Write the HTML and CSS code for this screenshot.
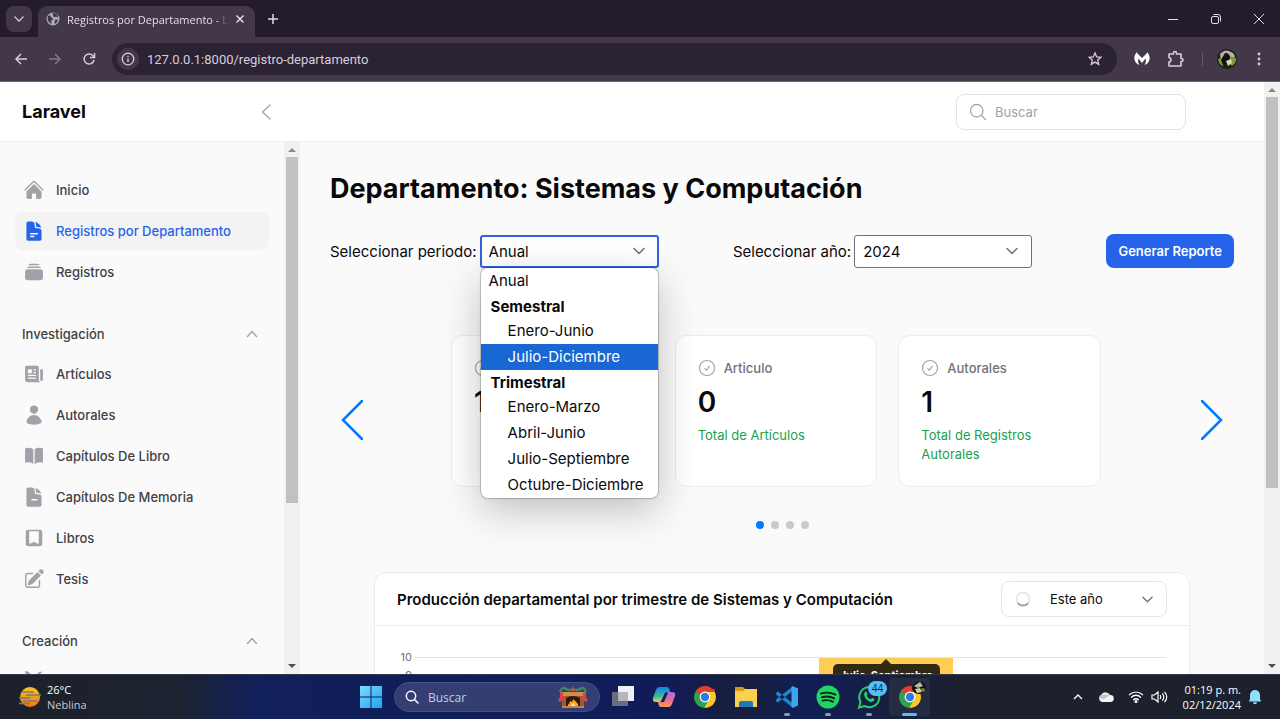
FILE: index.html
```html
<!DOCTYPE html>
<html lang="es">
<head>
<meta charset="utf-8">
<title>Registros por Departamento - Laravel</title>
<link rel="stylesheet" href="styles.css">
</head>
<body>
<svg class="defs" aria-hidden="true">
  <symbol id="chev-down" viewBox="0 0 12 12"><path d="M1 3.500 6 8.500l5-5" fill="none" stroke="currentColor" stroke-width="1.500" stroke-linecap="round" stroke-linejoin="round"/></symbol>
  <symbol id="check" viewBox="0 0 24 24"><path d="M9 12.750 11.250 15 15 9.750M22 12a10 10 0 1 1-20 0 10 10 0 0 1 20 0Z" fill="none" stroke="currentColor" stroke-width="1.500" stroke-linecap="round" stroke-linejoin="round"/></symbol>
  <symbol id="chrome" viewBox="0 0 24 24">
    <path d="M12 12 2.500 6.500A11 11 0 0 1 21.500 6.500Z" fill="#e2402f"/><path d="M12 12 21.500 6.500A11 11 0 0 1 12 23Z" fill="#fcc92c"/><path d="M12 12V23A11 11 0 0 1 2.500 6.500Z" fill="#2fa24c"/>
    <path d="M12 7h9.800L16.500 14.500Z" fill="#fcc92c"/><path d="M12 7 2.500 6.500 12 4h9.500l.4 3Z" fill="#e2402f"/><path d="M7.600 14.500 2.500 6.500l6 3 7.800 5L11 23Z" fill="#2fa24c"/>
    <circle cx="12" cy="12" r="5.400" fill="#fff"/><circle cx="12" cy="12" r="4.200" fill="#2f78e8"/>
  </symbol>
</svg>

<header class="tabstrip">
  <button class="tab-search" aria-label="Buscar pestañas"><svg width="10" height="10"><use href="#chev-down"/></svg></button>
  <div class="tab">
    <svg width="14" height="14" viewBox="0 0 14 14"><circle cx="7" cy="7" r="6.500" fill="#a9aeb5"/><path d="M2 4c2-1 3 0 3 1s2 .5 2 2-2 1-2 2 1 2 0 3C2 10 1 7 2 4ZM7 1c3-.5 5 2 5 4-1 1-2-1-3 0S7 4 7 3 6 2 7 1ZM9 8c1-1 3 0 3 0s-1 3-3 4c-1-1 0-3 0-4Z" fill="#43374a"/></svg>
    <span class="tab-title">Registros por Departamento - Laravel</span>
    <button class="plain" aria-label="Cerrar pestaña"><svg width="10" height="10" viewBox="0 0 10 10"><path d="m1.500 1.500 7 7m0-7-7 7" stroke="currentColor" stroke-width="1.500"/></svg></button>
  </div>
  <button class="plain new-tab" aria-label="Nueva pestaña"><svg width="12" height="12" viewBox="0 0 12 12"><path d="M6 1v10M1 6h10" stroke="currentColor" stroke-width="1.500"/></svg></button>
  <div class="window-controls">
    <button class="plain" aria-label="Minimizar"><svg width="12" height="12" viewBox="0 0 12 12"><path d="M1 6.500h10" stroke="currentColor"/></svg></button>
    <button class="plain" aria-label="Restaurar"><svg width="12" height="12" viewBox="0 0 12 12" fill="none" stroke="currentColor"><rect x="1.500" y="3.500" width="7" height="7" rx="1.500"/><path d="M3.500 1.500H8a2.500 2.500 0 0 1 2.500 2.500v4.500"/></svg></button>
    <button class="plain" aria-label="Cerrar"><svg width="12" height="12" viewBox="0 0 12 12"><path d="m1 1 10 10m0-10L1 11" stroke="currentColor"/></svg></button>
  </div>
</header>

<nav class="toolbar" aria-label="Navegador">
  <button class="plain" aria-label="Atrás"><svg width="14" height="14" viewBox="0 0 14 14" fill="none" stroke="currentColor" stroke-width="1.500"><path d="M13 7H2m5-5L2 7l5 5"/></svg></button>
  <button class="plain dim" aria-label="Adelante"><svg width="14" height="14" viewBox="0 0 14 14" fill="none" stroke="currentColor" stroke-width="1.500"><path d="M1 7h11M7 2l5 5-5 5"/></svg></button>
  <button class="plain" aria-label="Recargar"><svg width="14" height="14" viewBox="0 0 14 14" fill="none" stroke="currentColor" stroke-width="1.500"><path d="M12 8a5 5 0 1 1-1.300-4.500L12.300 5M12.500 1v4.500H8"/></svg></button>
  <div class="omnibox">
    <span class="site-info"><svg width="14" height="14" viewBox="0 0 14 14" fill="none" stroke="currentColor" stroke-width="1.300"><circle cx="7" cy="7" r="5.800"/><path d="M7 6.300V10M7 3.800v1.300"/></svg></span>
    <input class="url" type="text" aria-label="Dirección" value="127.0.0.1:8000/registro-departamento">
    <button class="plain" aria-label="Favorito"><svg width="16" height="16" viewBox="0 0 16 16" fill="none" stroke="currentColor" stroke-width="1.300"><path d="m8 2 1.700 3.900 4.200.4-3.200 2.800 1 4.200L8 11.100l-3.700 2.200 1-4.200L2.100 6.300l4.200-.4Z"/></svg></button>
  </div>
  <div class="extensions">
    <button class="plain" aria-label="Extensión"><svg width="16" height="16" viewBox="0 0 16 16"><path d="M3 1C0 4-.5 8 1.500 11c1 1.500 2.500 2.500 4 3C4 12 3.800 10 4.500 7.500L8 12l3.500-4.500c.7 2.500.5 4.500-1 6.500 1.500-.5 3-1.500 4-3C16.500 8 16 4 13 1c0 1-.5 2-1.500 2.500L8 7 4.500 3.500C3.500 3 3 2 3 1Z" fill="#fff"/></svg></button>
    <button class="plain" aria-label="Extensiones"><svg width="18" height="18" viewBox="0 0 18 18" fill="none" stroke="currentColor" stroke-width="1.600" stroke-linejoin="round"><path d="M2 4h4.500V3a1.500 1.500 0 0 1 3 0v1H14v4.500h.5a1.500 1.500 0 0 1 0 3H14V16H2v-4.300a2 2 0 0 0 0-4Z"/></svg></button>
    <span class="divider"></span>
    <button class="plain" aria-label="Perfil"><svg width="20" height="20" viewBox="0 0 20 20"><circle cx="10" cy="10" r="10" fill="#1b2015"/><path d="M3 5Q9-2 17 5l1 3-6 1-8 4Z" fill="#b9b0a3"/><path d="M1 10q3-2 7 2l-2 5Q2 16 1 10Zm11-3 7 2q1 4-4 8l-3-3Z" fill="#829a3e"/><path d="M8 4q5 0 5 5l-2 6-5 1-2-5Z" fill="#10110d"/><path d="m9 12 5-2 1 4-4 3Z" fill="#d5d9b0"/></svg></button>
    <button class="plain menu-btn" aria-label="Menú"><svg width="4" height="16" viewBox="0 0 4 16" fill="currentColor"><circle cx="2" cy="3" r="1.400"/><circle cx="2" cy="8" r="1.400"/><circle cx="2" cy="13" r="1.400"/></svg></button>
  </div>
</nav>

<div class="viewport">
  <div class="app">
    <header class="topbar">
      <div class="brand-area">
        <a class="brand" href="#">Laravel</a>
        <button class="plain" aria-label="Contraer menú"><svg width="10" height="16" viewBox="0 0 10 16"><path d="M9 1 1.500 8 9 15" fill="none" stroke="currentColor" stroke-width="1.300" stroke-linecap="round" stroke-linejoin="round"/></svg></button>
      </div>
      <label class="search">
        <svg width="20" height="20" viewBox="0 0 24 24"><path d="m21 21-5.197-5.197m0 0A7.500 7.500 0 1 0 5.196 5.196a7.500 7.500 0 0 0 10.607 10.607Z" fill="none" stroke="currentColor" stroke-width="1.500" stroke-linecap="round"/></svg>
        <input type="search" placeholder="Buscar" aria-label="Buscar">
      </label>
    </header>

    <div class="columns">
      <aside class="sidebar">
        <nav class="side-nav">
          <div class="group">
            <a class="item" href="#"><svg viewBox="0 0 24 24"><path d="M11.470 3.841a.75.75 0 0 1 1.060 0l8.690 8.690a.75.75 0 1 0 1.060-1.061l-8.689-8.690a2.250 2.250 0 0 0-3.182 0l-8.690 8.690a.75.75 0 1 0 1.061 1.060l8.690-8.689Z"/><path d="m12 5.432 8.159 8.159c.03.03.06.058.091.086v6.198c0 1.035-.84 1.875-1.875 1.875H15a.75.75 0 0 1-.75-.75v-4.500a.75.75 0 0 0-.75-.75h-3a.75.75 0 0 0-.75.75V21a.75.75 0 0 1-.75.75H5.625a1.875 1.875 0 0 1-1.875-1.875v-6.198a2.290 2.290 0 0 0 .091-.086L12 5.432Z"/></svg>Inicio</a>
            <a class="item active" href="#" aria-current="page"><svg viewBox="0 0 24 24"><path fill-rule="evenodd" d="M5.625 1.500c-1.036 0-1.875.84-1.875 1.875v17.250c0 1.035.84 1.875 1.875 1.875h12.750c1.035 0 1.875-.84 1.875-1.875V12.750A3.750 3.750 0 0 0 16.500 9h-1.875a1.875 1.875 0 0 1-1.875-1.875V5.250A3.750 3.750 0 0 0 9 1.500H5.625ZM7.500 15a.75.75 0 0 1 .75-.75h7.500a.75.75 0 0 1 0 1.500h-7.500A.75.75 0 0 1 7.500 15Zm.75 2.250a.75.75 0 0 0 0 1.500H12a.75.75 0 0 0 0-1.500H8.250Z"/><path d="M12.971 1.816A5.230 5.230 0 0 1 14.250 5.250v1.875c0 .207.168.375.375.375H16.500a5.230 5.230 0 0 1 3.434 1.279 9.768 9.768 0 0 0-6.963-6.963Z"/></svg>Registros por Departamento</a>
            <a class="item" href="#"><svg viewBox="0 0 24 24"><path d="M5.566 4.657A4.505 4.505 0 0 1 6.750 4.500h10.500c.41 0 .806.055 1.183.157A3 3 0 0 0 15.750 3h-7.500a3 3 0 0 0-2.684 1.657ZM2.250 12a3 3 0 0 1 3-3h13.500a3 3 0 0 1 3 3v6a3 3 0 0 1-3 3H5.250a3 3 0 0 1-3-3v-6ZM5.250 7.500c-.41 0-.806.055-1.184.157A3 3 0 0 1 6.750 6h10.500a3 3 0 0 1 2.683 1.657A4.505 4.505 0 0 0 18.750 7.500H5.250Z"/></svg>Registros</a>
          </div>
          <div class="group">
            <button class="group-head">Investigación<svg width="12" height="12" viewBox="0 0 12 12"><path d="m1.500 8.500 4.500-5 4.500 5" fill="none" stroke="currentColor" stroke-width="1.300" stroke-linecap="round" stroke-linejoin="round"/></svg></button>
            <a class="item" href="#"><svg viewBox="0 0 24 24"><path fill-rule="evenodd" d="M4.125 3C3.089 3 2.250 3.840 2.250 4.875V18a3 3 0 0 0 3 3h15a3 3 0 0 1-3-3V4.875C17.250 3.839 16.410 3 15.375 3H4.125ZM12 9.750a.75.75 0 0 0 0 1.500h1.500a.75.75 0 0 0 0-1.500H12Zm-.75-2.250a.75.75 0 0 1 .75-.75h1.500a.75.75 0 0 1 0 1.500H12a.75.75 0 0 1-.75-.75ZM6 12.750a.75.75 0 0 0 0 1.500h7.500a.75.75 0 0 0 0-1.500H6Zm-.75 3.750a.75.75 0 0 1 .75-.75h7.500a.75.75 0 0 1 0 1.500H6a.75.75 0 0 1-.75-.75ZM6 6.750a.75.75 0 0 0-.75.75v3c0 .414.336.75.75.75h3a.75.75 0 0 0 .75-.75v-3A.75.75 0 0 0 9 6.750H6Z"/><path d="M18.750 6.750h1.875c.621 0 1.125.504 1.125 1.125V18a1.500 1.500 0 0 1-3 0V6.750Z"/></svg>Artículos</a>
            <a class="item" href="#"><svg viewBox="0 0 24 24"><path d="M7.500 6a4.500 4.500 0 1 1 9 0 4.500 4.500 0 0 1-9 0ZM3.751 20.105a8.250 8.250 0 0 1 16.498 0 .75.75 0 0 1-.437.695A18.683 18.683 0 0 1 12 22.500c-2.786 0-5.433-.608-7.812-1.700a.75.75 0 0 1-.437-.695Z"/></svg>Autorales</a>
            <a class="item" href="#"><svg viewBox="0 0 24 24"><path d="M11.250 4.533A9.707 9.707 0 0 0 6 3a9.735 9.735 0 0 0-3.250.555.75.75 0 0 0-.5.707v14.250a.75.75 0 0 0 1 .707A8.237 8.237 0 0 1 6 18.750c1.995 0 3.823.707 5.250 1.886V4.533ZM12.750 20.636A8.214 8.214 0 0 1 18 18.750c.966 0 1.890.166 2.750.47a.75.75 0 0 0 1-.708V4.262a.75.75 0 0 0-.5-.707A9.735 9.735 0 0 0 18 3a9.707 9.707 0 0 0-5.250 1.533v16.103Z"/></svg>Capítulos De Libro</a>
            <a class="item" href="#"><svg viewBox="0 0 24 24"><path fill-rule="evenodd" d="M5.625 1.500c-1.036 0-1.875.84-1.875 1.875v17.250c0 1.035.84 1.875 1.875 1.875h12.750c1.035 0 1.875-.84 1.875-1.875V12.750A3.750 3.750 0 0 0 16.500 9h-1.875a1.875 1.875 0 0 1-1.875-1.875V5.250A3.750 3.750 0 0 0 9 1.500H5.625ZM9.750 14.250a.75.75 0 0 0 0 1.500H15a.75.75 0 0 0 0-1.500H9.750Z"/><path d="M14.250 5.250a5.230 5.230 0 0 0-1.279-3.434 9.768 9.768 0 0 1 6.963 6.963A5.230 5.230 0 0 0 16.500 7.500h-1.875a.375.375 0 0 1-.375-.375V5.250Z"/></svg>Capítulos De Memoria</a>
            <a class="item" href="#"><svg viewBox="0 0 24 24"><path fill-rule="evenodd" d="M6 3a3 3 0 0 0-3 3v12a3 3 0 0 0 3 3h12a3 3 0 0 0 3-3V6a3 3 0 0 0-3-3H6Zm1.500 1.500a.75.75 0 0 0-.75.75V17.500a.75.75 0 0 0 1.085.67L12 16.089l4.165 2.083a.75.75 0 0 0 1.085-.671V5.250a.75.75 0 0 0-.75-.75h-9Z"/></svg>Libros</a>
            <a class="item" href="#"><svg viewBox="0 0 24 24"><path d="M21.731 2.269a2.625 2.625 0 0 0-3.712 0l-1.157 1.157 3.712 3.712 1.157-1.157a2.625 2.625 0 0 0 0-3.712ZM19.513 8.199l-3.712-3.712-8.400 8.400a5.250 5.250 0 0 0-1.320 2.214l-.8 2.685a.75.75 0 0 0 .933.933l2.685-.8a5.250 5.250 0 0 0 2.214-1.320l8.400-8.400Z"/><path d="M5.250 5.250a3 3 0 0 0-3 3v10.500a3 3 0 0 0 3 3h10.500a3 3 0 0 0 3-3V13.500a.75.75 0 0 0-1.500 0v5.250a1.500 1.500 0 0 1-1.500 1.500H5.250a1.500 1.500 0 0 1-1.500-1.500V8.250a1.500 1.500 0 0 1 1.500-1.500h5.250a.75.75 0 0 0 0-1.500H5.250Z"/></svg>Tesis</a>
          </div>
          <div class="group">
            <button class="group-head">Creación<svg width="12" height="12" viewBox="0 0 12 12"><path d="m1.500 8.500 4.500-5 4.500 5" fill="none" stroke="currentColor" stroke-width="1.300" stroke-linecap="round" stroke-linejoin="round"/></svg></button>
            <a class="item" href="#" aria-label="Creación"><svg viewBox="0 0 24 24"><path d="M2 1.500c3-1 5 1 6.500 3L12 8l4-4.500c1.500-1.500 3-2 5-1.500L13 11l8 9-3 1.500-7-8-6 7-3-2 7-8-2.500-3C4.500 6 2.500 4.500 2 1.500Z"/></svg></a>
          </div>
        </nav>
        <div class="scrollbar" aria-hidden="true"><span class="arrow up"></span><span class="thumb thumb-side"></span><span class="arrow down"></span></div>
      </aside>

      <main class="main">
        <h1>Departamento: Sistemas y Computación</h1>
        <div class="filters">
          <div class="field">
            <label for="periodo">Seleccionar periodo:</label>
            <div class="select-wrap">
              <select id="periodo" class="select focused">
                <option selected>Anual</option>
                <optgroup label="Semestral"><option>Enero-Junio</option><option>Julio-Diciembre</option></optgroup>
                <optgroup label="Trimestral"><option>Enero-Marzo</option><option>Abril-Junio</option><option>Julio-Septiembre</option><option>Octubre-Diciembre</option></optgroup>
              </select>
              <svg class="caret" width="12" height="12"><use href="#chev-down"/></svg>
              <ul class="popup" role="listbox" aria-label="Periodo">
                <li class="opt" role="option">Anual</li>
                <li class="opt-group">Semestral</li>
                <li class="opt sub" role="option">Enero-Junio</li>
                <li class="opt sub hover" role="option">Julio-Diciembre</li>
                <li class="opt-group">Trimestral</li>
                <li class="opt sub" role="option">Enero-Marzo</li>
                <li class="opt sub" role="option">Abril-Junio</li>
                <li class="opt sub" role="option">Julio-Septiembre</li>
                <li class="opt sub" role="option">Octubre-Diciembre</li>
              </ul>
            </div>
          </div>
          <div class="field">
            <label for="anio">Seleccionar año:</label>
            <div class="select-wrap">
              <select id="anio" class="select"><option>2024</option></select>
              <svg class="caret" width="12" height="12"><use href="#chev-down"/></svg>
            </div>
          </div>
          <button class="primary">Generar Reporte</button>
        </div>

        <section class="carousel" aria-label="Totales">
          <button class="plain nav-arrow" aria-label="Anterior"><svg width="22" height="40" viewBox="0 0 22 40"><path d="M21 1 2 20l19 19" fill="none" stroke="currentColor" stroke-width="2.500" stroke-linecap="round"/></svg></button>
          <div class="cards">
            <article class="card">
              <div class="card-label"><svg width="18" height="18"><use href="#check"/></svg></div>
              <div class="card-value">1</div>
            </article>
            <article class="card">
              <div class="card-label"><svg width="18" height="18"><use href="#check"/></svg>Articulo</div>
              <div class="card-value">0</div>
              <div class="card-note">Total de Artículos</div>
            </article>
            <article class="card">
              <div class="card-label"><svg width="18" height="18"><use href="#check"/></svg>Autorales</div>
              <div class="card-value">1</div>
              <div class="card-note">Total de Registros Autorales</div>
            </article>
          </div>
          <button class="plain nav-arrow" aria-label="Siguiente"><svg width="22" height="40" viewBox="0 0 22 40"><path d="m1 1 19 19L1 39" fill="none" stroke="currentColor" stroke-width="2.500" stroke-linecap="round"/></svg></button>
        </section>
        <div class="dots"><span class="dot on"></span><span class="dot"></span><span class="dot"></span><span class="dot"></span></div>

        <section class="chart-card">
          <header class="chart-head">
            <h2>Producción departamental por trimestre de Sistemas y Computación</h2>
            <div class="select-wrap">
              <svg class="spinner" width="16" height="16" viewBox="0 0 16 16" fill="none" stroke-width="2"><circle cx="8" cy="8" r="6.500" stroke="#e8e8ea"/><path d="M2.800 12a6.500 6.500 0 0 0 10.400 0" stroke="#a1a1aa"/></svg>
              <select class="range" aria-label="Intervalo"><option>Este año</option></select>
              <svg class="caret" width="11" height="11"><use href="#chev-down"/></svg>
            </div>
          </header>
          <div class="chart">
            <div class="axis"><span>10</span><span>9</span></div>
            <div class="plot">
              <div class="slot"></div>
              <div class="slot"></div>
              <div class="slot"><div class="bar"><div class="tooltip">Julio-Septiembre</div></div></div>
              <div class="slot"></div>
            </div>
          </div>
        </section>
      </main>
    </div>
  </div>
  <div class="scrollbar" aria-hidden="true"><span class="arrow up"></span><span class="thumb thumb-page"></span><span class="arrow down"></span></div>
</div>

<footer class="taskbar">
  <div class="weather">
    <svg width="24" height="24" viewBox="0 0 24 24"><defs><linearGradient id="sun" x2="0" y2="1"><stop stop-color="#fbc51e"/><stop offset="1" stop-color="#f0751a"/></linearGradient></defs><circle cx="12" cy="12" r="10" fill="url(#sun)"/><path d="M4 7h12M8 10h15M1 13h11M5 16h15M1 18.500h11" stroke="#7e7a6d" stroke-width="1.300"/></svg>
    <div><strong>26°C</strong><span>Neblina</span></div>
  </div>
  <div class="task-center">
    <button class="plain" aria-label="Inicio"><svg width="22" height="22" viewBox="0 0 22 22"><defs><linearGradient id="win" x2="1" y2="1"><stop stop-color="#7edcfb"/><stop offset="1" stop-color="#1ba4f2"/></linearGradient></defs><path d="M0 0h10.500v10.500H0ZM11.500 0H22v10.500H11.500ZM0 11.500h10.500V22H0ZM11.500 11.500H22V22H11.500Z" fill="url(#win)"/></svg></button>
    <label class="task-search">
      <svg width="14" height="14" viewBox="0 0 14 14" fill="none" stroke="#fff" stroke-width="1.500" stroke-linecap="round"><circle cx="6" cy="6" r="4.700"/><path d="m9.500 9.500 3.500 3.500"/></svg>
      <input type="text" placeholder="Buscar" aria-label="Buscar en Windows">
      <svg width="32" height="24" viewBox="0 0 32 24"><path d="M5 8h22v14H5Z" fill="#9f5b2f"/><path d="M3 7h26v4H3Z" fill="#d58b4b"/><path d="M9 13q7-4 14 0v9H9Z" fill="#30180f"/><path d="M11 22c-1-3 2-3 2-6 2 1 2 2 3-2 2 2 3 2 4 4 2 1 1 4 0 4Z" fill="#f5a623"/><path d="M14 22c0-2 1-2 2-4 2 2 3 3 2 4Z" fill="#fff0a0"/><path d="M3 7q2-6 6-3 3 2 7 0 4 2 7 0 4-3 6 3" fill="none" stroke="#3f8a5b" stroke-width="2.500"/><path d="m16 1 2 5h-4ZM3 7l3 1v7l-3 2-2-2 2-3ZM29 7l-3 1v7l3 2 2-2-2-3Z" fill="#d9424e"/><path d="M5 22h22" stroke="#c9814a" stroke-width="2"/></svg>
    </label>
    <div class="apps">
      <button class="app-btn" aria-label="Vista de tareas"><svg width="24" height="24" viewBox="0 0 24 24"><path d="M7 1h16v15H7Z" fill="#eef0f4"/><path d="M1 7h16v14H1Z" fill="#777b84" opacity=".85"/><path d="M7 7h10v9H7Z" fill="#b5b7bc"/></svg></button>
      <button class="app-btn" aria-label="Copilot"><svg width="24" height="24" viewBox="0 0 24 24"><defs><linearGradient id="co1" x2="0" y2="1"><stop stop-color="#1683e5"/><stop offset=".6" stop-color="#38b99d"/><stop offset="1" stop-color="#e9d04d"/></linearGradient><linearGradient id="co2" x2="0" y2="1"><stop stop-color="#a56df0"/><stop offset=".5" stop-color="#ed6799"/><stop offset="1" stop-color="#f99a54"/></linearGradient></defs><path d="M7 2h8q2 0 2.500 2.500L18 7h-3q-2 0-2.500 2L11 14q-1 3-4 3H4q-4 0-3-4L4 5q1-3 3-3Z" fill="url(#co1)"/><path d="M17 22H9q-2 0-2.500-2.500L6 17h3q2 0 2.500-2L13 10q1-3 4-3h3q4 0 3 4l-3 8q-1 3-3 3Z" fill="url(#co2)"/><path d="M13 8h3l-4 9H8.500Z" fill="#17205a"/></svg></button>
      <button class="app-btn" aria-label="Chrome"><svg width="24" height="24"><use href="#chrome"/></svg></button>
      <button class="app-btn" aria-label="Explorador"><svg width="24" height="24" viewBox="0 0 24 24"><path d="M1 2h8l2 2v6H1Z" fill="#d9961c"/><path d="M1 6h8l2-2h12v18H1Z" fill="#fcd04f"/><path d="M5 22v-4q0-2 2-2h10q2 0 2 2v4Z" fill="#1b78ba"/></svg></button>
      <button class="app-btn open" aria-label="Visual Studio Code"><svg width="24" height="24" viewBox="0 0 24 24"><path d="m1 8 2-1.500L17.500 18v4.500L1 9.500ZM1 16l2 1.500L17.500 6V1.500L1 14.500Z" fill="#1d86cc"/><path d="m17.500 1 5.500 2.500v17L17.500 23l-1-1V2Z" fill="#39a7ea"/></svg></button>
      <button class="app-btn open" aria-label="Spotify"><svg width="24" height="24" viewBox="0 0 24 24"><circle cx="12" cy="12" r="11.500" fill="#1fd460"/><path d="M5 8.500q7.500-2.200 14.500 1.200M6 12.200q6.500-1.800 12.200 1.200M6.500 15.700q5.500-1.500 10.300 1" fill="none" stroke="#10201a" stroke-width="1.900" stroke-linecap="round"/></svg></button>
      <button class="app-btn open" aria-label="WhatsApp"><svg width="24" height="24" viewBox="0 0 24 24"><path d="M2 22.500 3.500 17A10 10 0 1 1 7.500 21Z" fill="none" stroke="#27cf66" stroke-width="2"/><path d="M8 7c1-1 2 0 2.500 2 .3 1-1 1-.5 2s2 3 3.500 3c1 0 1-1.500 2-1 2 1 2.500 1 1.500 2.500-2 3-6 .5-7.500-1S6 9 8 7Z" fill="#27cf66"/></svg><span class="badge">44</span></button>
      <button class="app-btn current" aria-label="Chrome, ventana activa"><svg width="24" height="24"><use href="#chrome"/></svg><svg class="avatar" width="16" height="14" viewBox="0 0 16 14"><ellipse cx="8" cy="7" rx="7" ry="6" fill="#11140f"/><path d="m3 5 6-4 3 4-5 2Z" fill="#bdb7a8"/><path d="m4 8 5-1 2 4-5 1Z" fill="#c9cf9a"/><circle cx="12" cy="9" r="2" fill="#72833b"/></svg></button>
    </div>
  </div>
  <div class="tray">
    <svg width="12" height="12" viewBox="0 0 12 12"><path d="m2 8 4-4 4 4" fill="none" stroke="#fff" stroke-width="1.300"/></svg>
    <svg class="cloud" width="16" height="12" viewBox="0 0 16 12"><path d="M4 11a4 4 0 0 1-.5-7.500A5 5 0 0 1 12 4a3.500 3.500 0 0 1 .5 7Z" fill="#f4f4f5"/><path d="M3 4q5-1 9 0l-6 4-5-1Z" fill="#c3c5c9"/></svg>
    <svg width="16" height="14" viewBox="0 0 16 14" fill="none" stroke="#fff" stroke-width="1.200"><path d="M1 5q7-6 14 0M3 7.500q5-4.500 10 0M5.200 10q2.800-2.500 5.600 0"/><circle cx="8" cy="11.500" r="1" fill="#fff"/></svg>
    <svg width="17" height="14" viewBox="0 0 17 14" fill="none" stroke="#fff" stroke-width="1.200"><path d="M1 5h2.500L7 2v10L3.500 9H1ZM9 5q1.500 2 0 4M11.300 3.300q3 3.700 0 7.400M13.500 1.800q4.500 5.200 0 10.400"/></svg>
    <div class="clock"><span>01:19 p. m.</span><span>02/12/2024</span></div>
    <svg width="14" height="16" viewBox="0 0 14 16"><path d="M7 1a5 5 0 0 0-5 5v4L.8 12.500h12.400L12 10V6a5 5 0 0 0-5-5ZM5 13.300a2 2 0 0 0 4 0Z" fill="#8fe1fd"/></svg>
  </div>
</footer>
</body>
</html>
```
FILE: styles.css
```css
*, *::before, *::after { box-sizing: border-box; }

body {
  margin: 0;
  height: 100vh;
  display: flex;
  flex-direction: column;
  overflow: hidden;
  font-family: Inter, sans-serif;
  font-size: 15px;
  color: #09090b;
  background: #fafafa;
}

button, input, select { font: inherit; color: inherit; }
a { color: inherit; text-decoration: none; }
svg { flex: none; display: block; }
.defs { position: absolute; width: 0; height: 0; }
.plain {
  display: flex;
  align-items: center;
  justify-content: center;
  padding: 0;
  border: 0;
  background: none;
}

/* Browser tabs */
.tabstrip {
  display: flex;
  align-items: center;
  flex: none;
  height: 37px;
  padding-left: 6px;
  background: #241b2c;
  color: #e4dbe8;
  font-family: "Open Sans", sans-serif;
}
.tab-search {
  display: flex;
  align-items: center;
  justify-content: center;
  width: 26px;
  height: 26px;
  padding: 0;
  border: 0;
  border-radius: 8px;
  background: #43374a;
}
.tab {
  display: flex;
  align-items: center;
  align-self: flex-end;
  gap: 7px;
  width: 217px;
  height: 31px;
  margin-left: 6px;
  padding: 0 10px 5px 8px;
  border-radius: 9px 9px 0 0;
  background: #43374a;
  font-size: 11px;
}
.tab-title {
  flex: 1;
  overflow: hidden;
  white-space: nowrap;
  mask-image: linear-gradient(90deg, #000 92%, transparent);
}
.new-tab { width: 36px; }
.window-controls { display: flex; margin-left: auto; }
.window-controls .plain { width: 43px; }

/* Browser toolbar */
.toolbar {
  display: flex;
  align-items: center;
  flex: none;
  height: 45px;
  padding: 0 16px 0 4px;
  background: #43374a;
  border-bottom: 1px solid #6b6170;
  color: #d9cddd;
  font-family: Roboto, sans-serif;
}
.toolbar > .plain { width: 34px; }
.toolbar > .dim { color: #82768a; }
.omnibox {
  display: flex;
  align-items: center;
  flex: 1;
  height: 32px;
  margin-left: 6px;
  padding: 0 14px 0 5px;
  border-radius: 16px;
  background: #2b2233;
}
.site-info {
  display: flex;
  align-items: center;
  justify-content: center;
  width: 22px;
  height: 22px;
  border-radius: 50%;
  background: #43374a;
}
.url {
  flex: 1;
  margin-left: 8px;
  padding: 0;
  border: 0;
  outline: 0;
  background: none;
  font-size: 13px;
}
.extensions { display: flex; align-items: center; gap: 17px; margin-left: 17px; }
.extensions .divider { width: 1px; height: 14px; margin-right: -3px; background: #65596d; }
.menu-btn { width: 10px; }

/* Scroll areas */
.viewport { display: flex; flex: 1; min-height: 0; }
.scrollbar {
  display: flex;
  flex-direction: column;
  align-items: center;
  flex: none;
  width: 16px;
  background: #f1f1f1;
}
.arrow {
  flex: none;
  width: 16px;
  height: 15px;
  background: #505050;
  clip-path: polygon(4px 10px, 12px 10px, 8px 6px);
}
.up { background: #8b8b8b; }
.down { margin-top: auto; transform: rotate(180deg); }
.thumb { width: 12px; background: #c1c1c1; }
.thumb-side { height: 65%; }
.thumb-page { height: 66%; }

/* Application */
.app { display: flex; flex-direction: column; flex: 1; min-width: 0; }
.topbar {
  display: flex;
  align-items: center;
  justify-content: space-between;
  flex: none;
  height: 60px;
  padding: 0 78px 0 22px;
  background: #fff;
  border-bottom: 1px solid #ededee;
}
.brand-area {
  display: flex;
  align-items: center;
  justify-content: space-between;
  width: 249px;
  color: #a1a1aa;
}
.brand { font-size: 18px; font-weight: 700; color: #09090b; }
.search {
  display: flex;
  align-items: center;
  gap: 7px;
  width: 230px;
  height: 36px;
  padding: 0 11px;
  border: 1px solid #e4e4e7;
  border-radius: 8px;
  color: #a1a1aa;
}
.search input {
  min-width: 0;
  padding: 0;
  border: 0;
  outline: 0;
  background: none;
  font-size: 13px;
}
.search input::placeholder { color: #a1a1aa; }
.columns { display: flex; flex: 1; min-height: 0; }

.sidebar { display: flex; flex: none; width: 300px; }
.side-nav {
  display: flex;
  flex-direction: column;
  gap: 25px;
  flex: 1;
  padding: 29px 15px 0;
  overflow: hidden;
}
.group { display: flex; flex-direction: column; flex: none; gap: 3px; }
.item, .group-head {
  display: flex;
  align-items: center;
  font-size: 13px;
  font-weight: 500;
  color: #3f3f46;
}
.item { gap: 11px; height: 38px; padding: 0 8px; border-radius: 8px; }
.item svg { width: 22px; height: 22px; fill: #a1a1aa; }
.item.active { background: #f3f3f4; color: #2563eb; }
.item.active svg { fill: #2563eb; }
.group-head {
  justify-content: space-between;
  height: 36px;
  padding: 0 11px 0 7px;
  border: 0;
  background: none;
}
.group-head svg { color: #a1a1aa; }

.main { flex: 1; min-width: 0; padding: 29px 30px 0; overflow: hidden; }
h1 { margin: 0; font-size: 27px; line-height: 36px; font-weight: 700; }
.filters {
  display: flex;
  align-items: center;
  justify-content: space-between;
  margin-top: 27px;
}
.field { display: flex; align-items: center; gap: 3px; }
.select-wrap { display: flex; align-items: center; position: relative; }
.select {
  appearance: none;
  width: 178px;
  height: 33px;
  padding: 0 8px;
  border: 1px solid #6b7280;
  border-radius: 3px;
  outline: 0;
  background: #fff;
}
.select.focused { width: 179px; padding: 0 7px; border: 2px solid #2f63dd; }
.caret { position: absolute; right: 14px; color: #6b7280; pointer-events: none; }
.primary {
  height: 34px;
  padding: 0 12px;
  border: 0;
  border-radius: 8px;
  background: #2563eb;
  color: #fff;
  font-size: 13px;
  font-weight: 600;
}
.popup {
  position: absolute;
  z-index: 5;
  top: 100%;
  left: 1px;
  right: 1px;
  margin: 0;
  padding: 0;
  overflow: hidden;
  list-style: none;
  background: #fff;
  border-radius: 7px;
  box-shadow: 0 0 1px 1px rgba(0, 0, 0, .22), 0 12px 40px rgba(0, 0, 0, .24);
}
.opt { padding-left: 8px; line-height: 26px; white-space: nowrap; }
.opt.sub { padding-left: 27px; }
.opt.hover { background: #1967d2; color: #fff; }
.opt-group { padding: 2px 0 0 10px; line-height: 22px; font-weight: 700; }

.carousel { display: flex; align-items: center; margin: 67px 11px 0; }
.nav-arrow { width: 22px; height: 40px; margin-top: 18px; color: #007aff; }
.cards {
  display: grid;
  grid-template-columns: repeat(3, minmax(0, 1fr));
  gap: 21px;
  flex: 1;
  margin: 0 100px 0 88px;
}
.card {
  padding: 22px;
  border: 1px solid #ececed;
  border-radius: 12px;
  background: #fff;
}
.card-label {
  display: flex;
  align-items: center;
  gap: 8px;
  height: 19px;
  font-size: 13px;
  font-weight: 500;
  color: #71717a;
}
.card-label svg { color: #a1a1aa; }
.card-value { margin-top: 8px; font-size: 28px; line-height: 34px; font-weight: 600; }
.card-note { margin-top: 7px; font-size: 13px; line-height: 19px; color: #16a34a; }
.dots { display: flex; justify-content: center; gap: 7px; margin-top: 34px; }
.dot { width: 8px; height: 8px; border-radius: 50%; background: #c9c9ca; }
.dot.on { background: #007aff; }

.chart-card {
  margin: 43px 44px 0;
  border: 1px solid #ececed;
  border-radius: 12px;
  background: #fff;
}
.chart-head {
  display: flex;
  align-items: center;
  justify-content: space-between;
  height: 53px;
  padding: 0 22px;
  border-bottom: 1px solid #ececed;
}
h2 { margin: 0; font-size: 15px; font-weight: 600; }
.range {
  appearance: none;
  width: 166px;
  height: 36px;
  padding: 0 48px;
  border: 1px solid #e4e4e7;
  border-radius: 8px;
  background: #fff;
  font-size: 13px;
}
.spinner { position: absolute; left: 14px; }
.chart { display: flex; gap: 3px; padding: 31px 23px 0 24px; }
.axis {
  display: flex;
  flex-direction: column;
  align-items: flex-end;
  flex: none;
  width: 13px;
  margin-top: -9px;
  font-size: 11px;
  line-height: 18px;
  color: #71717a;
}
.plot {
  display: grid;
  grid-template-columns: repeat(4, 1fr);
  flex: 1;
  height: 180px;
  padding-left: 5px;
  border-top: 1px solid #e4e4e7;
}
.slot { display: flex; justify-content: center; }
.bar { position: relative; width: 72%; background: #ffcd56; }
.tooltip {
  position: absolute;
  top: 6px;
  left: 10%;
  right: 10%;
  padding: 4px 0;
  border-radius: 5px;
  background: #332911;
  color: #fff;
  font-size: 11px;
  font-weight: 700;
  text-align: center;
}
.tooltip::before {
  content: "";
  position: absolute;
  bottom: 100%;
  left: 50%;
  margin-left: -5px;
  border: 5px solid transparent;
  border-top: 0;
  border-bottom-color: #332911;
}

/* Taskbar */
.taskbar {
  display: grid;
  grid-template-columns: 1fr auto 1fr;
  align-items: center;
  flex: none;
  height: 45px;
  padding: 0 18px;
  background: linear-gradient(90deg, #1c212b 0, #1c2230 14%, #10205a 20%, #101c58 52%, #191e3b 58%, #101e57 63%, #181f3d 70%, #1c212d 75%);
  border-top: 1px solid #33384a;
  color: #fff;
  font-family: "Open Sans", sans-serif;
  font-size: 11px;
  line-height: 15px;
}
.weather { display: flex; align-items: center; gap: 5px; }
.weather strong, .weather span, .clock span { display: block; }
.weather strong { font-weight: 500; }
.weather span { color: #c8cbd1; }
.task-center { display: flex; align-items: center; margin-left: 10px; }
.task-search {
  display: flex;
  align-items: center;
  gap: 9px;
  width: 206px;
  height: 30px;
  margin: 0 2px 0 12px;
  padding: 0 10px;
  border: 1px solid #45508a;
  border-radius: 15px;
  background: #343e73;
}
.task-search input {
  flex: 1;
  min-width: 0;
  padding: 0;
  border: 0;
  outline: 0;
  background: none;
  font-size: 12px;
}
.task-search input::placeholder { color: #c9cde0; }
.apps { display: flex; }
.app-btn {
  position: relative;
  display: flex;
  align-items: center;
  justify-content: center;
  width: 41px;
  height: 38px;
  padding: 0;
  border: 0;
  border-radius: 4px;
  background: none;
}
.open::after, .current::after {
  content: "";
  position: absolute;
  bottom: 0;
  width: 6px;
  height: 3px;
  border-radius: 2px;
  background: #9296ab;
}
.current { background: #252b40; }
.current::after { width: 15px; background: #5ebcf3; }
.badge {
  position: absolute;
  top: 3px;
  right: 2px;
  width: 19px;
  height: 15px;
  border-radius: 8px;
  background: #57bcf4;
  color: #0b2038;
  font-size: 10px;
  text-align: center;
}
.avatar { position: absolute; top: 3px; right: 3px; }
.tray { display: flex; align-items: center; justify-content: flex-end; gap: 7px; }
.cloud { margin: 0 7px; }
.clock { margin: 0 0 0 8px; text-align: right; }
```
